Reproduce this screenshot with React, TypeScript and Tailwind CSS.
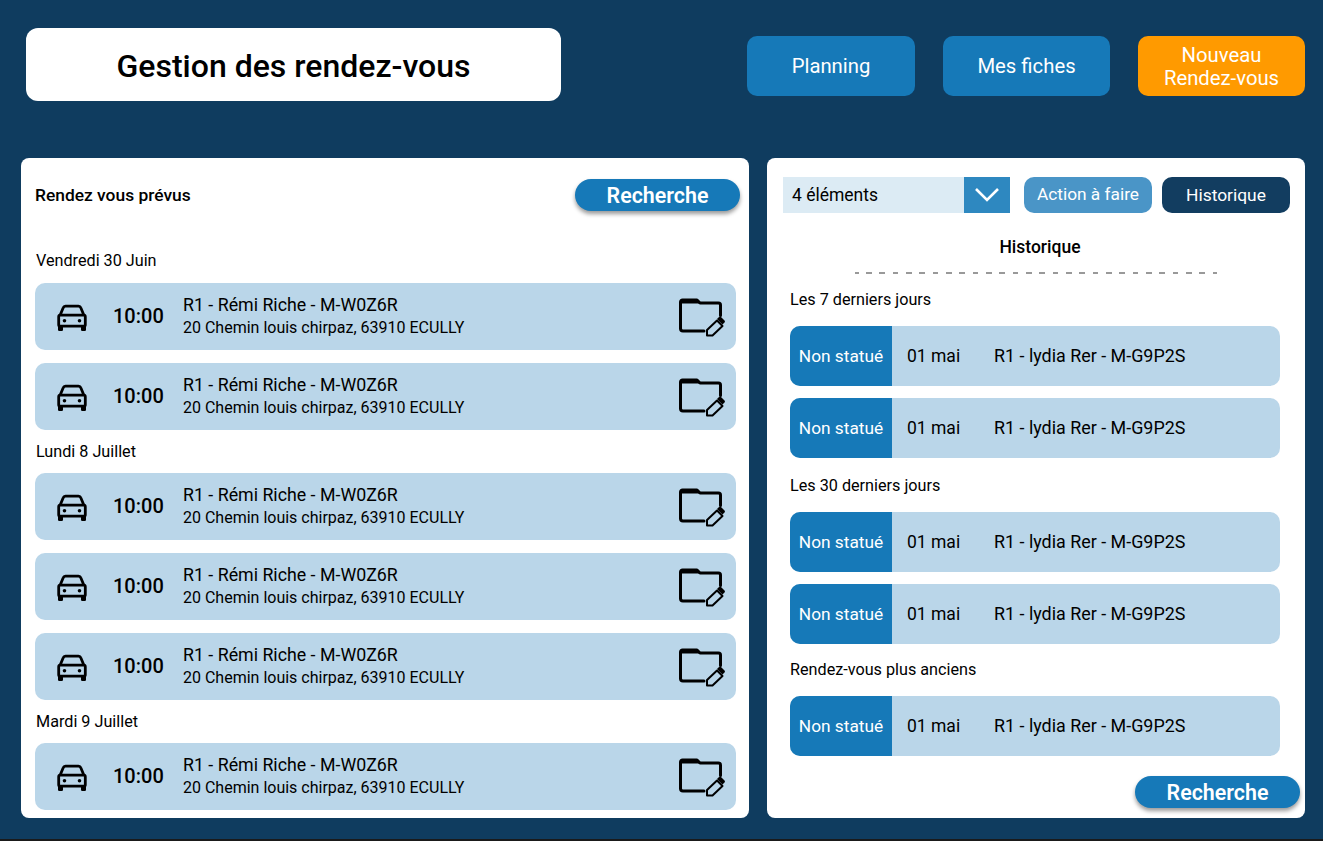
import React from "react";

const CarIcon = () => (
  <svg width="30" height="27" viewBox="0 0 30 27" className="mt-[2px] shrink-0">
    <path
      d="M3 11.500 6.200 3.800A2.500 2.500 0 0 1 8.500 2.200h13a2.500 2.500 0 0 1 2.300 1.600L27 11.500"
      fill="none"
      stroke="#000"
      strokeWidth="2.800"
      strokeLinejoin="round"
    />
    <rect x="1.700" y="11.200" width="26.600" height="11" rx="1.500" fill="none" stroke="#000" strokeWidth="2.800" />
    <circle cx="7.500" cy="16.700" r="1.800" fill="#000" />
    <circle cx="22.500" cy="16.700" r="1.800" fill="#000" />
    <rect x="1" y="21" width="5" height="6" rx="1.200" fill="#000" />
    <rect x="24" y="21" width="5" height="6" rx="1.200" fill="#000" />
  </svg>
);

const FolderEdit = () => (
  <svg width="46" height="40" viewBox="0 0 46 40" className="shrink-0">
    <path
      d="M25 34H4a2.500 2.500 0 0 1-2.500-2.500V5a2 2 0 0 1 2-2H18l3 3h18.500a2 2 0 0 1 2 2v10.500"
      fill="none"
      stroke="#000"
      strokeWidth="3"
      strokeLinecap="round"
      strokeLinejoin="round"
    />
    <path d="M3 2h15l3.500 4.500H3z" fill="#000" />
    <path d="M28 38.500V33l10-9.500 5.500 5.500-10 9.500z" fill="none" stroke="#000" strokeWidth="2" strokeLinejoin="round" />
    <path d="M38 22l2-2a1.500 1.500 0 0 1 2 0l3.500 3.500a1.500 1.500 0 0 1 0 2l-2 2z" fill="#000" />
  </svg>
);

const SearchButton = () => (
  <button className="h-[32px] w-[165px] rounded-full bg-[#1679b8] pt-px text-[21.4px] font-semibold text-white shadow-[0_3px_4px_rgba(0,0,0,0.4)]">
    Recherche
  </button>
);

const SectionLabel = ({ children, className }: { children: React.ReactNode; className: string }) => (
  <div className={`text-[16.2px] leading-[18px] text-black ${className}`}>{children}</div>
);

const Appointment = ({ className = "" }: { className?: string }) => (
  <div className={`flex h-[67px] items-center rounded-[10px] bg-[#bad6e9] pl-[22px] pr-[11px] ${className}`}>
    <CarIcon />
    <span className="ml-[26px] w-[70px] pb-[2px] text-[20px] font-medium text-black">10:00</span>
    <div className="flex-1 pb-[2px]">
      <div className="text-[17.8px] leading-[23px] text-black">R1 - Rémi Riche - M-W0Z6R</div>
      <div className="text-[16px] leading-[23px] text-black">20 Chemin louis chirpaz, 63910 ECULLY</div>
    </div>
    <FolderEdit />
  </div>
);

const HistoryRow = ({ className = "" }: { className?: string }) => (
  <div className={`flex h-[60px] items-center overflow-hidden rounded-[10px] bg-[#bad6e9] ${className}`}>
    <div className="flex h-full w-[102px] items-center justify-center bg-[#1679b8] pt-px text-[17.3px] text-white">Non statué</div>
    <span className="ml-[15px] w-[87px] text-[17.5px] text-black">01 mai</span>
    <span className="text-[17.9px] text-black">R1 - lydia Rer - M-G9P2S</span>
  </div>
);

export default function App() {
  return (
    <div className="flex h-[841px] w-[1323px] flex-col overflow-hidden bg-[#0f3c5f] font-['Roboto',sans-serif]">
      <div className="flex flex-1 flex-col pl-[21px] pr-[18px]">
        <header className="flex h-[158px] items-start pt-[28px]">
          <div className="ml-[5px] flex h-[73px] w-[535px] items-center justify-center rounded-[12px] bg-white pt-[2px] text-[32px] font-medium text-black">
            Gestion des rendez-vous
          </div>
          <div className="ml-[186px] mt-[8px] flex gap-[28px]">
            <button className="h-[60px] w-[168px] rounded-[10px] bg-[#1679b8] text-[20.3px] text-white">Planning</button>
            <button className="h-[60px] w-[167px] rounded-[10px] bg-[#1679b8] text-[20.3px] text-white">Mes fiches</button>
            <button className="h-[60px] w-[167px] rounded-[10px] bg-[#ff9a00] pt-px text-[20.3px] leading-[23px] text-white">
              Nouveau
              <br />
              Rendez-vous
            </button>
          </div>
        </header>

        <main className="flex gap-[18px]">
          <section className="h-[660px] w-[728px] rounded-[8px] bg-white pl-[14px] pr-[13px] pt-[21px]">
            <div className="-mr-[4px] flex h-[32px] items-center justify-between">
              <h2 className="text-[17.4px] font-medium text-black">Rendez vous prévus</h2>
              <SearchButton />
            </div>
            <SectionLabel className="ml-px mt-[41px]">Vendredi 30 Juin</SectionLabel>
            <Appointment className="mt-[13px]" />
            <Appointment className="mt-[13px]" />
            <SectionLabel className="ml-px mt-[13px]">Lundi 8 Juillet</SectionLabel>
            <Appointment className="mt-[12px]" />
            <Appointment className="mt-[13px]" />
            <Appointment className="mt-[13px]" />
            <SectionLabel className="ml-px mt-[13px]">Mardi 9 Juillet</SectionLabel>
            <Appointment className="mt-[12px]" />
          </section>

          <section className="h-[660px] w-[538px] rounded-[8px] bg-white pl-[16px] pr-[5px] pt-[19px]">
            <div className="flex items-center pr-[10px]">
              <div className="flex h-[36px] w-[227px] items-center bg-[#dcebf4]">
                <span className="flex-1 pl-[9px] text-[17.5px] text-black">4 éléments</span>
                <div className="flex h-full w-[46px] items-center justify-center bg-[#2e88c0]">
                  <svg width="26" height="16" viewBox="0 0 26 16">
                    <path d="M2 2l11 11L24 2" fill="none" stroke="#fff" strokeWidth="2.600" />
                  </svg>
                </div>
              </div>
              <button className="ml-[14px] h-[36px] w-[128px] rounded-[10px] bg-[#4a95c7] text-[17.3px] text-white">Action à faire</button>
              <button className="ml-[10px] h-[36px] w-[128px] rounded-[10px] bg-[#123d60] text-[17.4px] text-white">Historique</button>
            </div>
            <div className="ml-[7px] w-[490px]">
              <h3 className="mt-[24px] pl-[10px] text-center text-[17.5px] font-medium leading-[20px] text-black">Historique</h3>
              <div className="ml-[65px] mt-[15px] h-[2px] w-[362px] bg-[repeating-linear-gradient(90deg,#999_0_3.5px,transparent_3.5px_11px,#999_11px_13.33px)]" />
              <SectionLabel className="mt-[17px]">Les 7 derniers jours</SectionLabel>
              <HistoryRow className="mt-[17px]" />
              <HistoryRow className="mt-[12px]" />
              <SectionLabel className="mt-[19px]">Les 30 derniers jours</SectionLabel>
              <HistoryRow className="mt-[17px]" />
              <HistoryRow className="mt-[12px]" />
              <SectionLabel className="mt-[17px]">Rendez-vous plus anciens</SectionLabel>
              <HistoryRow className="mt-[17px]" />
            </div>
            <div className="mt-[20px] flex justify-end">
              <SearchButton />
            </div>
          </section>
        </main>
      </div>
      <div className="h-[2px] bg-[#1a1a1a]" />
    </div>
  );
}
